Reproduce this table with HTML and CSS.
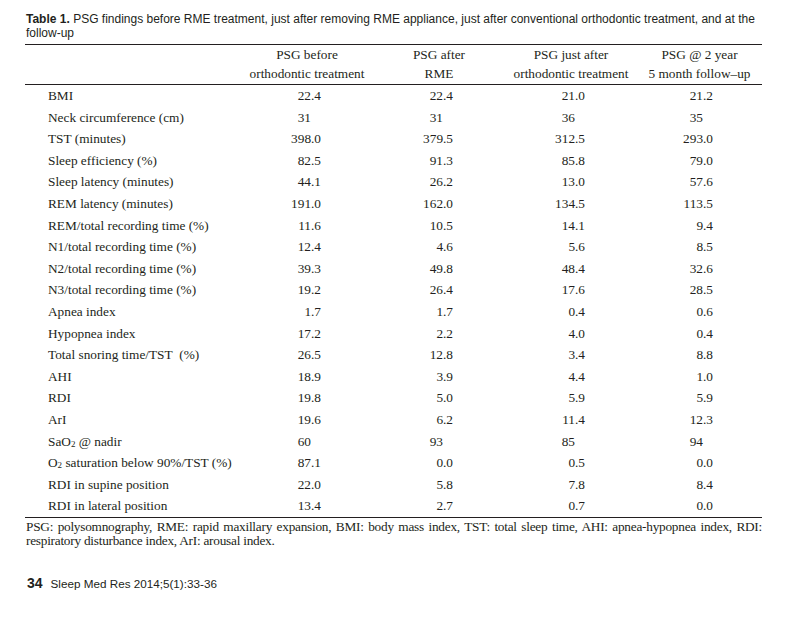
FILE: index.html
```html
<!DOCTYPE html>
<html lang="en">
<head>
<meta charset="utf-8">
<title>Table 1</title>
<link rel="stylesheet" href="styles.css">
</head>
<body>
<div class="page">
  <p class="caption"><b>Table 1.</b> PSG findings before RME treatment, just after removing RME appliance, just after conventional orthodontic treatment, and at the follow-up</p>
  <table class="data">
    <colgroup>
      <col class="c-label"><col class="c-val"><col class="c-val"><col class="c-val"><col class="c-last">
    </colgroup>
    <thead>
      <tr>
        <th></th>
        <th>PSG before<br>orthodontic treatment</th>
        <th>PSG after<br>RME</th>
        <th>PSG just after<br>orthodontic treatment</th>
        <th>PSG @ 2 year<br>5 month follow–up</th>
      </tr>
    </thead>
    <tbody>
      <tr><td>BMI</td><td>22.4</td><td>22.4</td><td>21.0</td><td>21.2</td></tr>
      <tr><td>Neck circumference (cm)</td><td class="int">31</td><td class="int">31</td><td class="int">36</td><td class="int">35</td></tr>
      <tr><td>TST (minutes)</td><td>398.0</td><td>379.5</td><td>312.5</td><td>293.0</td></tr>
      <tr><td>Sleep efficiency (%)</td><td>82.5</td><td>91.3</td><td>85.8</td><td>79.0</td></tr>
      <tr><td>Sleep latency (minutes)</td><td>44.1</td><td>26.2</td><td>13.0</td><td>57.6</td></tr>
      <tr><td>REM latency (minutes)</td><td>191.0</td><td>162.0</td><td>134.5</td><td>113.5</td></tr>
      <tr><td>REM/total recording time (%)</td><td>11.6</td><td>10.5</td><td>14.1</td><td>9.4</td></tr>
      <tr><td>N1/total recording time (%)</td><td>12.4</td><td>4.6</td><td>5.6</td><td>8.5</td></tr>
      <tr><td>N2/total recording time (%)</td><td>39.3</td><td>49.8</td><td>48.4</td><td>32.6</td></tr>
      <tr><td>N3/total recording time (%)</td><td>19.2</td><td>26.4</td><td>17.6</td><td>28.5</td></tr>
      <tr><td>Apnea index</td><td>1.7</td><td>1.7</td><td>0.4</td><td>0.6</td></tr>
      <tr><td>Hypopnea index</td><td>17.2</td><td>2.2</td><td>4.0</td><td>0.4</td></tr>
      <tr><td>Total snoring time/TST&nbsp; (%)</td><td>26.5</td><td>12.8</td><td>3.4</td><td>8.8</td></tr>
      <tr><td>AHI</td><td>18.9</td><td>3.9</td><td>4.4</td><td>1.0</td></tr>
      <tr><td>RDI</td><td>19.8</td><td>5.0</td><td>5.9</td><td>5.9</td></tr>
      <tr><td>ArI</td><td>19.6</td><td>6.2</td><td>11.4</td><td>12.3</td></tr>
      <tr><td>SaO<span class="sub">2</span> @ nadir</td><td class="int">60</td><td class="int">93</td><td class="int">85</td><td class="int">94</td></tr>
      <tr><td>O<span class="sub">2</span> saturation below 90%/TST (%)</td><td>87.1</td><td>0.0</td><td>0.5</td><td>0.0</td></tr>
      <tr><td>RDI in supine position</td><td>22.0</td><td>5.8</td><td>7.8</td><td>8.4</td></tr>
      <tr><td>RDI in lateral position</td><td>13.4</td><td>2.7</td><td>0.7</td><td>0.0</td></tr>
    </tbody>
  </table>
  <p class="note">PSG: polysomnography, RME: rapid maxillary expansion, BMI: body mass index, TST: total sleep time, AHI: apnea-hypopnea index, RDI: respiratory disturbance index, ArI: arousal index.</p>
  <p class="folio"><b class="pageno">34</b><span class="journal">Sleep Med Res 2014;5(1):33-36</span></p>
</div>
</body>
</html>
```
FILE: styles.css
```css
html, body {
  margin: 0;
  padding: 0;
  background: #ffffff;
}

.page {
  width: 737px;
  margin-left: 25px;
  color: #231f20;
}

.caption {
  margin: 13px 0 0 1px;
  font-family: "Liberation Sans", Arial, sans-serif;
  font-size: 12px;
  line-height: 13.5px;
  color: #231f20;
}

.caption b {
  font-weight: bold;
}

.data {
  margin-top: 4px;
  width: 737px;
  border-collapse: collapse;
  table-layout: fixed;
  font-family: "Liberation Serif", "Times New Roman", serif;
  font-size: 13.3px;
}

.c-label { width: 216px; }
.c-val { width: 132px; }
.c-last { width: 125px; }

.data thead th {
  border-top: 1px solid #231f20;
  border-bottom: 1px solid #231f20;
  font-weight: normal;
  text-align: center;
  line-height: 19px;
  padding: 0 0 1px 0;
  white-space: nowrap;
}

.data tbody td {
  padding: 0 52px 0 0;
  height: 21.6px;
  line-height: 21.6px;
  text-align: right;
  white-space: nowrap;
}

.data tbody td:first-child {
  text-align: left;
  padding: 0 0 0 23px;
}

.data tbody td:last-child {
  padding-right: 49px;
}

.data tbody td.int {
  padding-right: 62px;
}

.data tbody td.int:last-child {
  padding-right: 59px;
}

.data tbody tr:last-child td {
  border-bottom: 1px solid #231f20;
}

.sub {
  font-size: 9px;
  line-height: 0;
  vertical-align: -1px;
}

.note {
  margin: 2px 0 0 1px;
  font-family: "Liberation Serif", "Times New Roman", serif;
  font-size: 13.3px;
  letter-spacing: -0.25px;
  line-height: 14px;
  text-align: justify;
}

.folio {
  margin: 27px 0 0 2px;
  font-family: "Liberation Sans", Arial, sans-serif;
  line-height: 16px;
  display: flex;
  align-items: baseline;
  gap: 8px;
}

.pageno {
  font-size: 14px;
  font-weight: bold;
}

.journal {
  font-size: 11.7px;
}
```
